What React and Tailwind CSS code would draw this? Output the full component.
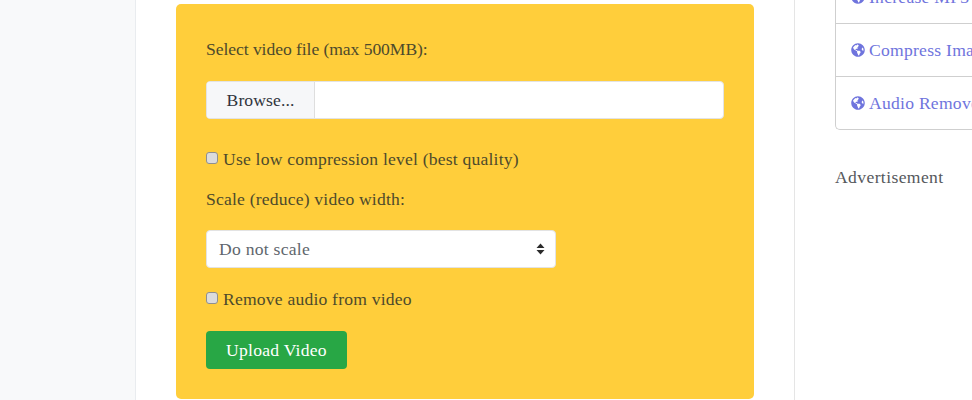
import React from "react";
import { FaGlobeAmericas } from "react-icons/fa";

const font = { fontFamily: "'Liberation Serif', serif" };

function Item({ label, first }) {
  return (
    <div className={`h-[53px] shrink-0 flex items-center pl-[15px] whitespace-nowrap tracking-[0.25px] text-[#6f74dd] ${first ? "" : "border-t border-[#cfcfcf]"}`}>
      <FaGlobeAmericas className="w-[14px] h-[14px] mr-[4px] shrink-0" />
      <span>{label}</span>
    </div>
  );
}

function Check({ label }) {
  return (
    <label className="flex items-center h-6 text-[#4d4a2c] tracking-[0.2px]">
      <span className="w-[12px] h-[12px] mr-[5px] mb-[3px] rounded-[3px] border border-[#8f8f8f] bg-[#dcdcdc] shrink-0" />
      {label}
    </label>
  );
}

export default function App() {
  return (
    <div className="flex h-[400px] w-[972px] overflow-hidden bg-white text-[17.6px] leading-6" style={font}>
      <aside className="w-[136px] shrink-0 bg-[#f8f9fa] border-r border-[#e9ecef]" />
      <main className="w-[659px] shrink-0 border-r border-[#e5e5e5] px-[40px] pt-[4px]">
        <div className="h-[395px] rounded-[5px] bg-[#ffce3b] p-[30px] text-[#4d4a2c]">
          <div className="h-6 mt-[3px] tracking-[-0.07px]">Select video file (max 500MB):</div>
          <div className="mt-[20px] flex h-[38px] rounded-[4px] border border-[#e3e3e3] bg-white overflow-hidden">
            <div className="w-[108px] flex items-center justify-center bg-[#f6f7f9] border-r border-[#dedede] text-[#30343c] tracking-[0.1px]">Browse...</div>
          </div>
          <div className="mt-[28px]"><Check label="Use low compression level (best quality)" /></div>
          <div className="mt-[16px] h-6 tracking-[0.19px]">Scale (reduce) video width:</div>
          <div className="mt-[19px] flex items-center justify-between w-[350px] h-[38px] rounded-[4px] border border-[#e3e3e3] bg-white pl-[12px] pr-[10px] text-[#60666d] tracking-[0.25px]">
            <span>Do not scale</span>
            <svg width="9" height="12" viewBox="0 0 9 12" className="text-[#2b2b2b]"><path d="M4.5 0.5L8.5 5H0.5Z M0.5 7H8.5L4.5 11.5Z" fill="currentColor" /></svg>
          </div>
          <div className="mt-[19px]"><Check label="Remove audio from video" /></div>
          <div className="mt-[20px] flex items-center justify-center w-[141px] h-[38px] rounded-[4px] bg-[#28a745] text-white tracking-[0.25px]">Upload Video</div>
        </div>
      </main>
      <aside className="flex-1 min-w-0 pl-[40px]">
        <div className="w-[240px] h-[130px] flex flex-col justify-end rounded-bl-[5px] border-l border-b border-[#cfcfcf] overflow-hidden">
          <Item label="Increase MP3 Volume" first />
          <Item label="Compress Image" />
          <Item label="Audio Remover" />
        </div>
        <div className="mt-[35px] text-[#55585c] whitespace-nowrap tracking-[0.38px]">Advertisement</div>
      </aside>
    </div>
  );
}
